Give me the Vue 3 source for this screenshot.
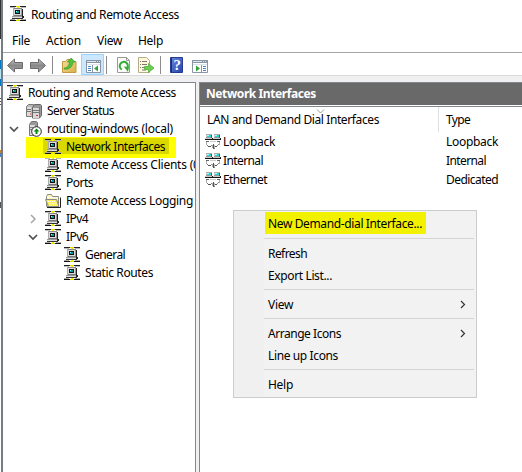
<script setup>
import { h } from 'vue'

// Sets letter-spacing so that a label takes its design width.
const vFit = {
  mounted(el, { value }) {
    const n = el.textContent.length
    const w = el.getBoundingClientRect().width
    el.style.letterSpacing = ((value - w) / n).toFixed(3) + 'px'
  },
}

const px = (x, y, w, height, fill) => h('rect', { x, y, width: w, height, fill })
const svg = (cells) =>
  h('svg', { width: 16, height: 16, viewBox: '0 0 16 16', 'shape-rendering': 'crispEdges' }, cells.map((c) => px(...c)))

const NetIcon = () =>
  svg([
    [0, 0, 16, 1, '#222'], [0, 1, 5, 1, '#bbb'], [11, 1, 5, 1, '#bbb'],
    [6, 0, 4, 1, '#e8e000'], [7, 1, 2, 1, '#f5ef00'],
    [4, 2, 8, 1, '#888'], [3, 2, 1, 8, '#aaa'], [4, 3, 7, 7, '#dcdcdc'], [11, 3, 1, 7, '#999'], [12, 3, 1, 7, '#222'],
    [5, 4, 5, 4, '#111'], [6, 5, 3, 2, '#0a9a9a'], [6, 5, 1, 1, '#8ff'],
    [4, 9, 8, 1, '#777'], [2, 10, 11, 1, '#999'], [2, 11, 10, 1, '#ddd'], [12, 10, 2, 2, '#222'],
    [2, 12, 11, 1, '#333'], [0, 14, 16, 1, '#111'], [0, 13, 5, 1, '#aaa'], [11, 13, 5, 1, '#aaa'],
    [7, 13, 2, 1, '#f5ef00'], [6, 14, 4, 1, '#e8e000'],
  ])

const PcIcon = () =>
  svg([
    [1, 0, 6, 1, '#aaa'], [1, 1, 1, 3, '#ccc'], [2, 1, 4, 2, '#20d8d8'], [2, 1, 2, 1, '#aff'], [6, 1, 1, 3, '#555'],
    [1, 3, 5, 1, '#999'], [0, 4, 7, 1, '#ccc'], [7, 4, 1, 1, '#222'], [0, 5, 8, 1, '#111'],
    [9, 0, 6, 1, '#aaa'], [9, 1, 1, 3, '#ccc'], [10, 1, 4, 2, '#20d8d8'], [10, 1, 2, 1, '#aff'], [14, 1, 1, 3, '#555'],
    [9, 3, 5, 1, '#999'], [8, 4, 7, 1, '#ccc'], [15, 4, 1, 1, '#222'], [8, 5, 8, 1, '#111'],
    [1, 7, 3, 1, '#666'], [12, 7, 3, 1, '#666'], [5, 7, 6, 1, '#ccc'],
    [1, 8, 1, 3, '#aaa'], [14, 8, 1, 3, '#aaa'], [2, 11, 1, 1, '#777'], [13, 10, 1, 1, '#888'],
    [3, 12, 3, 1, '#555'], [6, 11, 2, 1, '#888'], [8, 10, 1, 5, '#555'], [7, 11, 1, 3, '#aaa'],
    [9, 11, 1, 3, '#bbb'], [10, 12, 2, 1, '#555'], [12, 11, 1, 1, '#888'], [9, 14, 1, 1, '#888'],
  ])

const tree = [
  { icon: 'net', text: 'Routing and Remote Access', w: 148, level: 'l0' },
  { icon: 'servers', text: 'Server Status', w: 67, level: 'l1' },
  { icon: 'server', text: 'routing-windows (local)', w: 126, level: 'l1', open: true },
  { icon: 'net', text: 'Network Interfaces', w: 99, level: 'l2', marked: true },
  { icon: 'net', text: 'Remote Access Clients (0)', w: 137, level: 'l2' },
  { icon: 'net', text: 'Ports', w: 27, level: 'l2' },
  { icon: 'folder', text: 'Remote Access Logging', w: 127, level: 'l2' },
  { icon: 'net', text: 'IPv4', w: 22, level: 'l2', open: false },
  { icon: 'net', text: 'IPv6', w: 22, level: 'l2', open: true },
  { icon: 'net', text: 'General', w: 40, level: 'l3' },
  { icon: 'net', text: 'Static Routes', w: 68, level: 'l3' },
]

const rows = [
  { name: 'Loopback', nw: 52, type: 'Loopback', tw: 52 },
  { name: 'Internal', nw: 40, type: 'Internal', tw: 40 },
  { name: 'Ethernet', nw: 44, type: 'Dedicated', tw: 52 },
]

const groups = [
  [{ text: 'New Demand-dial Interface...', w: 154, marked: true }],
  [{ text: 'Refresh', w: 39 }, { text: 'Export List...', w: 64 }],
  [{ text: 'View', w: 25, sub: true }],
  [{ text: 'Arrange Icons', w: 73, sub: true }, { text: 'Line up Icons', w: 70 }],
  [{ text: 'Help', w: 25 }],
]
</script>

<template>
  <div class="screen">
    <div class="behind" />
    <div class="window">
      <header class="title"><NetIcon /><span v-fit="148">Routing and Remote Access</span></header>
      <nav class="menubar">
        <span class="m1"><b v-fit="18">File</b></span><span class="m2"><b v-fit="35">Action</b></span>
        <span class="m3"><b v-fit="25">View</b></span><span><b v-fit="25">Help</b></span>
      </nav>
      <div class="toolbar">
        <svg width="245" height="22" viewBox="0 0 245 22">
          <defs>
            <linearGradient id="g" x1="0" y1="0" x2="0" y2="1"><stop offset="0" stop-color="#ccc" /><stop offset=".5" stop-color="#888" /><stop offset="1" stop-color="#aaa" /></linearGradient>
            <linearGradient id="f" x1="0" y1="0" x2="1" y2="1"><stop offset="0" stop-color="#f5df99" /><stop offset="1" stop-color="#d9ae4b" /></linearGradient>
            <linearGradient id="b" x1="0" y1="0" x2="1" y2="1"><stop offset="0" stop-color="#6f86d8" /><stop offset="1" stop-color="#2343ad" /></linearGradient>
          </defs>
          <path d="M4.500 12.500 11.500 6v3.500h8v6h-8V19z" fill="url(#g)" stroke="#6a6a6a" />
          <path d="M42.500 12.500 35.500 6v3.500h-8v6h8V19z" fill="url(#g)" stroke="#6a6a6a" />
          <path d="M49.500 3v18M103.500 3v18M157.500 3v18" stroke="#8d8d8d" />
          <path d="M59.500 19.500V8.500h3l1.500-2h4l1 2h4v11z" fill="url(#f)" stroke="#c39a40" />
          <path d="M61 15c3 0 5-2 5.500-6h-2.300l4-4 4 4h-2.200c-.5 5-4 8-9 7z" fill="#4fc23c" stroke="#35962a" stroke-width=".6" />
          <path d="M78.500 1.500h22v20h-22z" fill="#cce8ff" stroke="#99d1ff" />
          <path d="M83.500 7.500h14v12h-14z" fill="#fff" stroke="#8795a5" />
          <path d="M83 7h15v3H83z" fill="#8795a5" /><path d="M84 8.500h9M94 8.500h1M96 8.500h1M84 11.500h13" stroke="#dce4ec" />
          <path d="M89.500 12v7" stroke="#8795a5" /><path d="M85 13.500h3M85 15.500h3M85 17.500h3" stroke="#4f86bd" />
          <path d="m95 12.500v6l-4-3z" fill="#2fa336" />
          <path d="M114.500 4.500h9l3 3v12h-12z" fill="#fbfbfb" stroke="#999" />
          <path d="M123.500 4.500v3h3" fill="none" stroke="#999" />
          <path d="M118.800 16.500a4.100 4.100 0 1 1 5.200-1" fill="none" stroke="#35ad35" stroke-width="2" /><path d="m120.800 13.500 5.200.5-1 5z" fill="#35ad35" />
          <path d="M135.500 4.500h8l3 3v12h-11z" fill="#fff8dc" stroke="#b5ac88" />
          <path d="M139 8.500h5M139 11.500h5M139 14.500h4M139 17h4M137 8.500h1M137 11.500h1M137 14.500h1" stroke="#777" />
          <path d="M141.500 13.500h4v-3l5.500 4.500-5.500 4.500v-3h-4z" fill="#69cf50" stroke="#48a936" stroke-width=".7" />
          <path d="M167.500 4.500h12v15h-12z" fill="url(#b)" stroke="#243c91" /><path d="M168.500 5v14" stroke="#18306f" />
          <text x="170.500" y="17.300" fill="#fff" class="help">?</text>
          <path d="M189.500 7.500h15v12h-15z" fill="#fff" stroke="#8795a5" />
          <path d="M189 7h16v3h-16z" fill="#8795a5" /><path d="M190 8.500h9M200 8.500h1M202 8.500h1M190 11.500h14" stroke="#dce4ec" />
          <path d="M198.500 12v7" stroke="#8795a5" /><path d="M200 13.500h3M200 15.500h3M200 17.500h3" stroke="#4f86bd" />
          <path d="m193 12.500v6l4-3z" fill="#2fa336" />
        </svg>
      </div>
      <main class="panes">
        <section class="tree">
          <div v-for="n in tree" :key="n.text" class="node" :class="[n.level, { marked: n.marked }]">
            <span class="twist">
              <svg v-if="n.open === true" width="10" height="8"><path d="m1 2 4 4 4-4" fill="none" stroke="#505050" stroke-width="1.700" /></svg>
              <svg v-else-if="n.open === false" width="10" height="10"><path d="m3 1 4 4-4 4" fill="none" stroke="#a6a6a6" stroke-width="1.500" /></svg>
            </span>
            <span class="glyph">
              <NetIcon v-if="n.icon === 'net'" />
              <svg v-else-if="n.icon === 'servers'" width="16" height="16">
                <path d="m.5 3.500 2-2h5v10l-2 2h-5z" fill="#bbb" stroke="#777" /><path d="M1 4h4v9H1z" fill="#ddd" />
                <path d="m6.500 4.500 2-3h6l1 1v10l-2 2.500h-7z" fill="#999" stroke="#666" /><path d="M7 5h6v10H7z" fill="#d8d8d8" />
                <path d="M1 6.500h4M1 8.500h4M7 7.500h6M7 9.500h6M13.500 4v11" stroke="#777" /><path d="M4 11h1M10 12.500h2" stroke="#d33" />
              </svg>
              <svg v-else-if="n.icon === 'server'" width="16" height="16">
                <path d="m3.500 3.500 2-3h5l1 1v10l-2 3h-6z" fill="#999" stroke="#777" /><path d="M4 4h5v10H4z" fill="#ddd" />
                <path d="M4 6.500h5M4 8.500h5" stroke="#888" /><circle cx="10.500" cy="10.500" r="4.800" fill="#fff" stroke="#222" />
                <path d="m10.500 7.500 3 3h-2v2.500h-2v-2.500h-2z" fill="#078b15" />
              </svg>
              <svg v-else width="16" height="16">
                <path d="M1.500 13.500v-10l1-2h4l1 2h6v10z" fill="#fff9b5" stroke="#8b8b80" />
                <path d="m3.500 13.500-3-7h11l2.500 7z" fill="#fbf05a" stroke="#888" /><path d="M2 14.500h13.500V4.500" fill="none" stroke="#222" />
                <path d="M3 8.500h8M4.500 10.500h8M4 12.500h8M3 4.500h9" stroke="#fff" stroke-dasharray="1 1" />
              </svg>
            </span>
            <span class="label"><b v-fit="n.w">{{ n.text }}</b></span>
          </div>
        </section>
        <section class="list">
          <h1><b v-fit="110">Network Interfaces</b></h1>
          <div class="cols">
            <span class="c1"><b v-fit="172">LAN and Demand Dial Interfaces</b></span><span class="c2"><b v-fit="24">Type</b></span>
            <svg class="sort" width="9" height="5"><path d="m1 .5 3.500 3.500L8 .5" fill="none" stroke="#999" /></svg>
          </div>
          <div v-for="r in rows" :key="r.name" class="row">
            <span class="pc"><PcIcon /></span><span class="name"><b v-fit="r.nw">{{ r.name }}</b></span><span><b v-fit="r.tw">{{ r.type }}</b></span>
          </div>
        </section>
      </main>
    </div>
    <div class="popup">
      <div v-for="(g, i) in groups" :key="i" class="group">
        <div v-for="m in g" :key="m.text" class="item" :class="{ hot: m.marked }">
          <span><b v-fit="m.w">{{ m.text }}</b></span>
          <svg v-if="m.sub" width="6" height="9"><path d="m1 1 3.500 3.500L1 8" fill="none" stroke="#333" stroke-width="1.200" /></svg>
        </div>
      </div>
    </div>
  </div>
</template>

<style>
body { margin: 0; overflow: hidden; }
</style>

<style scoped>
.screen { position: relative; display: flex; width: 522px; height: 472px; overflow: hidden; background: #fff; color: #000; font: 12px/18px "Noto Sans", "Open Sans", sans-serif; white-space: nowrap; }
.screen b { font-weight: inherit; display: inline-block; }
svg { display: block; flex: none; }
.behind { width: 1px; flex: none; background: linear-gradient(#333 39px, #fff 39px 60px, #0078c8 60px 69px, #b5e5f2 69px 79px, #0078c8 79px 86px, #fff 86px 98px, #555 98px 99px, #fff 99px 101px, #555 101px 102px, #fff 102px 104px, #555 104px 105px, #fff 105px 150px, #c98325 150px 153px, #4d80ae 153px 157px, #fff 157px 202px, #555 202px 208px, #fff 208px); }
.window { box-sizing: border-box; width: 521px; border-left: 2px solid #747d87; display: flex; flex-direction: column; }
.title { display: flex; align-items: center; height: 30px; padding-left: 7px; gap: 5px; }
.title svg { margin-top: -3px; }
.title span { display: inline-block; }
.menubar { display: flex; height: 22px; align-items: center; padding-left: 9px; border-bottom: 1px solid #a5a5a5; }
.m1 { width: 34px; } .m2 { width: 51px; } .m3 { width: 41px; }
.toolbar { height: 22px; border-bottom: 1px solid #d9d9d9; }
.help { font: bold 15px "Liberation Serif", serif; }
.panes { flex: 1; display: flex; gap: 3px; padding-top: 6px; background: #f0f0f0; }
.tree { box-sizing: border-box; width: 193px; border: solid #828790; border-width: 1px 1px 0 0; background: #fff; overflow: hidden; padding-top: 1px; }
.node { display: flex; height: 18px; align-items: center; }
.twist { box-sizing: border-box; width: 23px; flex: none; display: flex; padding-left: 6px; }
.glyph { width: 16px; flex: none; }
.label { padding: 0 4px 0 5px; line-height: 16px; }
.l0 .twist { display: none; }
.l0 { padding-left: 4px; }
.l2 { padding-left: 19px; }
.l3 { padding-left: 38px; }
.marked { box-sizing: border-box; background: linear-gradient(#d9d900, #d9d900) 17px 1px / 126px 16px no-repeat, #ff0; height: 21px; width: 150px; margin: -1px 0 -2px 23px; padding: 0 0 2px 0; position: relative; }
.marked .twist { display: none; }
.marked .glyph { margin-left: 19px; }
.list { flex: 1; border: solid #828790; border-width: 1px 0 0 1px; background: #fff; }
h1 { margin: 0; height: 22px; padding-left: 6px; background: #696969; color: #fff; font-size: 12px; line-height: 22px; font-weight: 700; border-bottom: 1px solid #fff; }
.cols { position: relative; display: flex; height: 25px; border-top: 1px solid #828790; align-items: center; }
.c1 { box-sizing: border-box; width: 239px; padding-left: 7px; border-right: 1px solid #e0e0e0; line-height: 25px; }
.c2 { padding-left: 7px; }
.sort { position: absolute; left: 116px; top: 2px; }
.row { display: flex; height: 19px; align-items: center; }
.pc { width: 18px; padding-left: 5px; }
.name { width: 223px; }
.popup { position: absolute; box-sizing: border-box; left: 233px; top: 210px; width: 244px; height: 188px; border: 1px solid #ccc; background: linear-gradient(90deg, #f0f0f0 30px, #f2f2f2 30px); padding: 1px 2px 0 30px; }
.group + .group { border-top: 1px solid #d5d5d5; margin-top: 3px; padding-top: 3px; }
.group:nth-child(2) { margin-top: 4px; }
.item { display: flex; align-items: center; justify-content: space-between; height: 22px; padding: 0 8px 0 4px; }
.item span { padding-top: 1px; }
.hot { width: 154px; margin-left: 1px; padding: 0 4px 0 3px; background: #f2f200; }
</style>
